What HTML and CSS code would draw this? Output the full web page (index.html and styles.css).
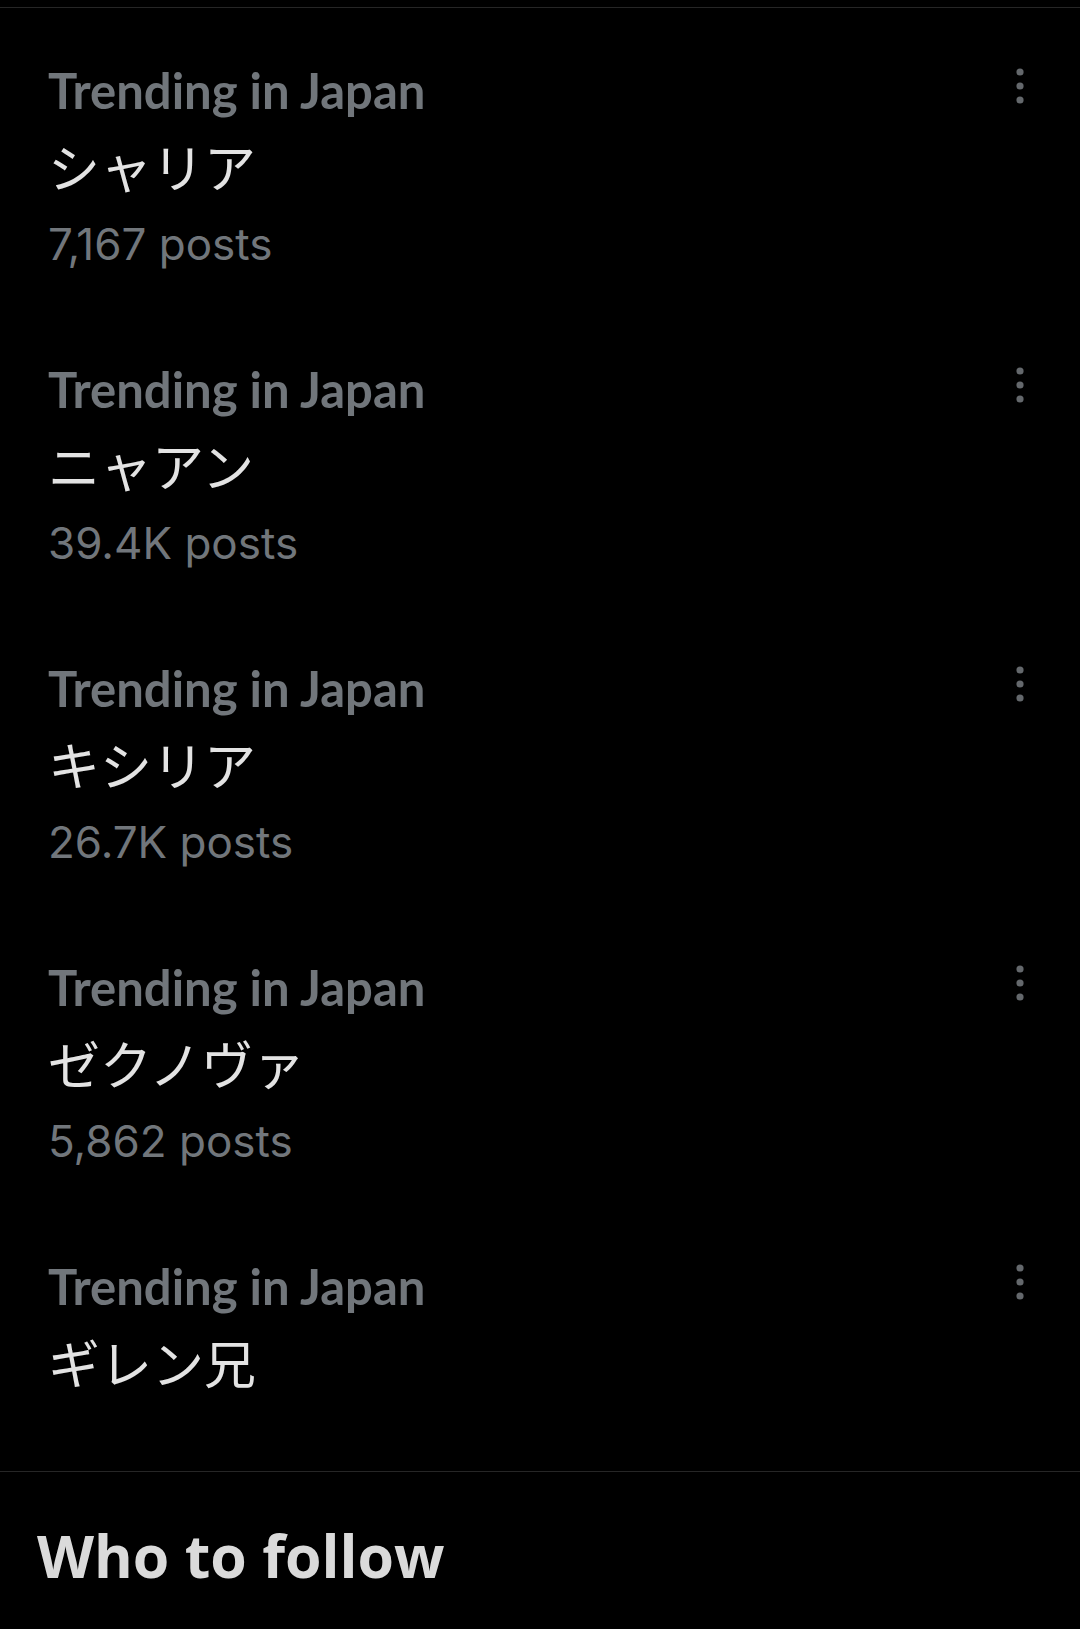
FILE: index.html
```html
<!DOCTYPE html>
<html lang="ja">
<head>
  <meta charset="UTF-8">
  <title>Trends</title>
  <link rel="stylesheet" href="styles.css">
</head>
<body>

<ul class="trends">
  <li class="trend">
    <div class="trend-info">
      <div class="trend-label">Trending in Japan</div>
      <div class="trend-name">シャリア</div>
      <div class="trend-count">7,167 posts</div>
    </div>
    <svg class="more" viewBox="0 0 24 40"><circle cx="12" cy="6" r="3.6"/><circle cx="12" cy="20" r="3.6"/><circle cx="12" cy="34" r="3.6"/></svg>
  </li>
  <li class="trend">
    <div class="trend-info">
      <div class="trend-label">Trending in Japan</div>
      <div class="trend-name">ニャアン</div>
      <div class="trend-count">39.4K posts</div>
    </div>
    <svg class="more" viewBox="0 0 24 40"><circle cx="12" cy="6" r="3.6"/><circle cx="12" cy="20" r="3.6"/><circle cx="12" cy="34" r="3.6"/></svg>
  </li>
  <li class="trend">
    <div class="trend-info">
      <div class="trend-label">Trending in Japan</div>
      <div class="trend-name">キシリア</div>
      <div class="trend-count">26.7K posts</div>
    </div>
    <svg class="more" viewBox="0 0 24 40"><circle cx="12" cy="6" r="3.6"/><circle cx="12" cy="20" r="3.6"/><circle cx="12" cy="34" r="3.6"/></svg>
  </li>
  <li class="trend">
    <div class="trend-info">
      <div class="trend-label">Trending in Japan</div>
      <div class="trend-name">ゼクノヴァ</div>
      <div class="trend-count">5,862 posts</div>
    </div>
    <svg class="more" viewBox="0 0 24 40"><circle cx="12" cy="6" r="3.6"/><circle cx="12" cy="20" r="3.6"/><circle cx="12" cy="34" r="3.6"/></svg>
  </li>
  <li class="trend">
    <div class="trend-info">
      <div class="trend-label">Trending in Japan</div>
      <div class="trend-name">ギレン兄</div>
    </div>
    <svg class="more" viewBox="0 0 24 40"><circle cx="12" cy="6" r="3.6"/><circle cx="12" cy="20" r="3.6"/><circle cx="12" cy="34" r="3.6"/></svg>
  </li>
</ul>

<section class="follow">
  <h2>Who to follow</h2>
</section>

</body>
</html>
```

FILE: styles.css
```css
html {
  background: #000;
}

body {
  margin: 0;
  padding-top: 7px;
  background: #000;
  font-family: Inter, "Noto Sans CJK JP", sans-serif;
}

.trends {
  list-style: none;
  margin: 0;
  padding: 22px 0;
  border-top: 1px solid #262626;
  border-bottom: 1px solid #262626;
}

.trend {
  display: flex;
  justify-content: space-between;
  align-items: flex-start;
  padding: 24px 48px 47px 48px;
}

.trend-label {
  font-family: Lato, sans-serif;
  font-weight: 700;
  font-size: 49px;
  line-height: 72px;
  color: #71767b;
}

.trend-name {
  font-family: "Noto Sans CJK JP", sans-serif;
  font-size: 52px;
  line-height: 80px;
  color: #e3e3e3;
}

.trend-count {
  font-family: Inter, sans-serif;
  font-size: 44px;
  line-height: 76px;
  color: #71767b;
}

.more {
  width: 24px;
  height: 40px;
  margin-top: 12px;
  fill: #64686c;
}

.follow {
  padding: 43px 37px 0;
}

.follow h2 {
  margin: 0;
  font-family: "Open Sans", sans-serif;
  font-weight: 700;
  font-size: 59px;
  line-height: 80px;
  color: #dadada;
}
```
